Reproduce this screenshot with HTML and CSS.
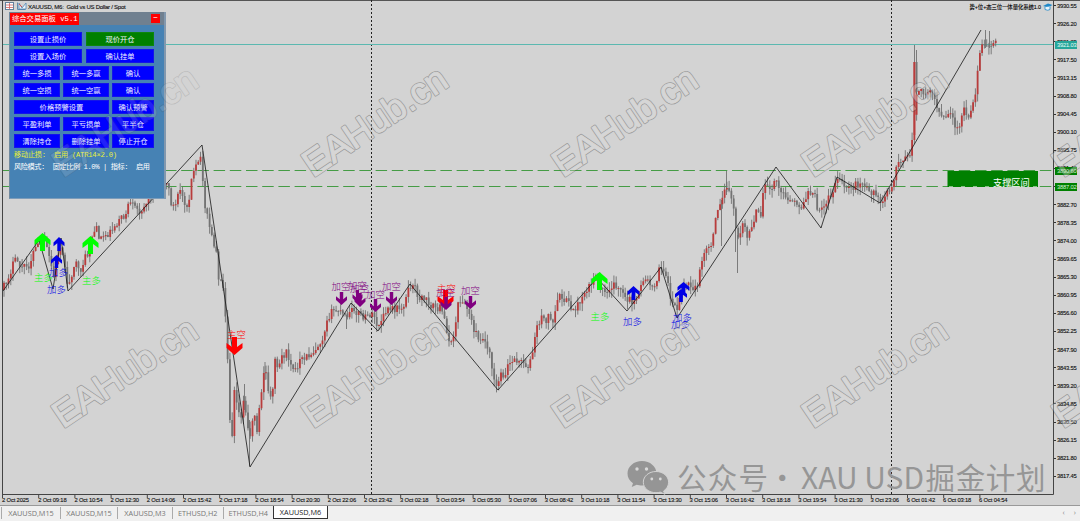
FILE: index.html
```html
<!DOCTYPE html>
<html lang="zh-CN">
<head>
<meta charset="utf-8">
<title>XAUUSD, M6</title>
<link rel="stylesheet" href="styles.css">
</head>
<body>
<div class="terminal">
  <main class="chart">
    <svg class="plot" id="plot" width="1054" height="495" viewBox="0 0 1054 495"></svg>
    <div class="prices" id="prices"></div>
    <div class="times" id="times"></div>

    <div class="title">
      <svg width="23" height="9" viewBox="0 0 23 9">
        <rect x=".5" y=".5" width="8" height="7" fill="#fff" stroke="#64809c"/>
        <path d="M1 3h7M1 5.5h7M4.5 1v6" stroke="#d06060" stroke-width=".8"/>
        <path d="M12.5 .5v7h8" fill="none" stroke="#5d89ac"/>
        <path d="M14 1l3 5 4-5v6h-7z" fill="#eef4f9" stroke="#4f86b5" stroke-width=".8"/>
        <path d="M14 2l3 3" stroke="#d05050"/>
      </svg>
      <span class="title-text">XAUUSD, M6:&nbsp; Gold vs US Dollar / Spot</span>
    </div>
    <div class="expert">
      <span>势+位+态三位一体量化系统1.0</span>
      <svg width="10" height="8" viewBox="0 0 10 8"><path d="M0 3l5-2.500 4.500 1.500-4.500 2.500z" fill="#2088c8"/><path d="M2 4v2.500q3 1.500 5 0V3.500" fill="#e9f4fb" stroke="#2088c8" stroke-width=".8"/></svg>
    </div>

    <section class="panel">
      <header class="panel-head"><span class="panel-title">综合交易面板 v5.1</span><span class="panel-min">−</span></header>
      <div class="panel-body">
        <div class="row halves"><button>设置止损价</button><button class="go">现价开仓</button></div>
        <div class="row halves"><button>设置入场价</button><button>确认挂单</button></div>
        <div class="row thirds"><button>统一多损</button><button>统一多赢</button><button>确认</button></div>
        <div class="row thirds"><button>统一空损</button><button>统一空赢</button><button>确认</button></div>
        <div class="row thirds"><button class="wide">价格预警设置</button><button>确认预警</button></div>
        <div class="row thirds"><button>平盈利单</button><button>平亏损单</button><button>平半仓</button></div>
        <div class="row thirds"><button>清除持仓</button><button>删除挂单</button><button>停止开仓</button></div>
        <p class="status trail">移动止损: &nbsp;启用 (ATR14×2.0)</p>
        <p class="status risk">风险模式: &nbsp;固定比例 1.0% | 指标: &nbsp;启用</p>
      </div>
    </section>
  </main>
  <nav class="tabs">
    <span>XAUUSD,M15</span><span>XAUUSD,M15</span><span>XAUUSD,M3</span><span>ETHUSD,H2</span><span>ETHUSD,H4</span><span class="active">XAUUSD,M6</span>
    <div class="scroll"><i>‹</i><i>›</i></div>
  </nav>
  <svg class="overlay" id="overlay" width="1080" height="521" viewBox="0 0 1080 521"></svg>
</div>
<script src="chart.js"></script>
</body>
</html>
```
FILE: styles.css
```css
* { box-sizing: border-box; }
body { margin: 0; background: #d3d3d3; font-family: "Liberation Sans", "Noto Sans CJK SC", sans-serif; }
.terminal { position: relative; width: 1080px; height: 521px; overflow: hidden; display: flex; flex-direction: column; }
.chart { position: relative; height: 505px; display: grid; grid-template-columns: 1054px 26px; grid-template-rows: 495px 10px; border-top: 1px solid #555; background: #d3d3d3; }
.plot { display: block; margin-top: -1px; }

.prices { margin-top: -4.500px; height: 490px; font-size: 5.800px; letter-spacing: -.22px; color: #111; -webkit-text-stroke: .12px #111; }
.price { height: 18.110px; line-height: 18.110px; display: flex; align-items: center; white-space: nowrap; }
.price::before { content: ""; width: 2px; height: 1px; background: #333; margin-right: 1px; }
.tag { position: absolute; left: 1055px; width: 22px; height: 8px; line-height: 8px; padding-left: 2px; color: #d9f3d9; background: #008000; -webkit-text-stroke: 0; }
.tag.last { background: #26a69a; color: #e4fbf8; }

.times { display: flex; padding-left: 2px; font-size: 5.800px; line-height: 8px; letter-spacing: -.15px; color: #111; -webkit-text-stroke: .12px #111; white-space: nowrap; }
.time { flex: 0 0 36.200px; width: 36.200px; }

.title { position: absolute; left: 5px; top: 1px; height: 9px; display: flex; align-items: center; font-size: 6px; letter-spacing: -.25px; color: #111; -webkit-text-stroke: .12px #111; white-space: nowrap; }
.expert { position: absolute; right: 27px; top: 0; height: 11px; display: flex; align-items: center; gap: 2px; font-size: 5.400px; letter-spacing: -.1px; color: #000; -webkit-text-stroke: .1px #000; white-space: nowrap; }

.panel { position: absolute; left: 9px; top: 11px; width: 157px; height: 187px; background: #4682b4; border-right: 2px solid #8298ae; border-bottom: 1px solid #7c9cba; border-left: 1px solid #70899f; }
.panel-head { height: 13px; background: #708090; display: flex; justify-content: space-between; align-items: center; padding-right: 4px; }
.panel-title { height: 12px; line-height: 12px; padding: 0 2px; width: 69px; background: #f00; color: #fff; font-family: "Liberation Mono", "Noto Sans CJK SC", monospace; font-size: 7.300px; white-space: nowrap; }
.panel-min { width: 9px; height: 9px; line-height: 8px; background: #f00; color: #fff; font-size: 8px; text-align: center; }
.panel-body { padding: 7px 10px 0 4px; display: flex; flex-direction: column; gap: 3px; }
.row { display: grid; height: 14px; }
.halves { grid-template-columns: 68px 68px; gap: 4px; }
.thirds { grid-template-columns: 46px 46px 42px; gap: 3px; }
.wide { grid-column: span 2; }
button { margin: 0; padding: 0; border: 1px solid #1414e8; background: #00f; color: #f0f0ff; font: 7.300px/11px "Noto Sans CJK SC", sans-serif; white-space: nowrap; }
.go { background: #008000; border-color: #0d860d; }
.status { margin: 0; height: 8.500px; font: 7.200px/9px "Liberation Mono", "Noto Sans CJK SC", monospace; white-space: pre; }
.trail { color: #e8f03a; letter-spacing: -.24px; }
.risk { color: #fff; letter-spacing: -.43px; }

.tabs { height: 16px; display: flex; background: #f0f0f0; border-top: 1px solid #999; padding-left: 1px; font: 7.300px/12px "Open Sans", sans-serif; color: #777; }
.tabs span { height: 12px; margin-top: 1px; text-align: center; white-space: nowrap; border-left: 1px solid #aaa; width: 50.500px; }
.tabs span:nth-child(1) { width: 59px; }
.tabs span:nth-child(2) { width: 57px; }
.tabs span:nth-child(3) { width: 55px; }
.tabs .active { margin-top: 0; height: 13px; width: 55px; border: 1px solid #333; border-top: 0; background: #fff; color: #222; }
.scroll { margin-left: auto; padding-right: 4px; display: flex; gap: 9px; color: #888; }
.scroll i { font-style: normal; }

.overlay { position: absolute; inset: 0; pointer-events: none; }
.wm { font: 37px "Liberation Sans", sans-serif; stroke-linejoin: round; }
.wm-edge { fill: #404040; stroke: #404040; stroke-width: 2.500; }
.wm-face { fill: #dcdcdc; stroke: #dcdcdc; stroke-width: .9; }
.on-chart { opacity: .36; }
.on-panel { opacity: .15; }
.brand { font: 29.500px "Noto Sans CJK SC", sans-serif; fill: #969696; }
.mark { font: 9.400px "Noto Sans CJK SC", sans-serif; font-weight: 300; }
.zone { font: 9.200px "Noto Sans CJK SC", sans-serif; fill: #fff; }
```
FILE: chart.js
```js
// Price path in plot coordinates: x, y pairs.
const path = [3,289,7,280,11,270,14,262,18,261,21,268,25,267,29,266,32,256,36,248,40,243,44,241,48,252,51,265,54,278,57,260,60,243,63,252,65,270,67,281,69,286,72,272,75,262,79,273,82,266,85,258,89,253,92,236,96,228,100,238,106,234,110,232,115,225,120,219,125,217,128,205,133,206,138,211,143,208,148,200,153,190,163,187,167,182,169,190,172,207,176,205,180,188,184,200,188,207,191,180,194,173,199,160,202,160,204,203,208,219,212,238,216,250,219,280,223,285,226,320,228,365,230,420,232,438,234,385,237,400,240,420,244,400,248,430,251,433,254,410,257,430,260,403,263,378,266,372,268,393,272,395,275,362,279,365,282,356,287,353,291,362,297,372,300,362,306,357,312,353,318,345,323,337,327,318,333,311,338,310,343,315,348,317,353,309,358,312,364,319,370,314,375,318,377,326,381,323,386,311,393,309,402,308,406,298,410,286,415,288,420,300,424,297,428,302,434,307,440,308,444,318,448,335,452,347,455,325,459,300,465,304,468,312,472,320,475,334,480,337,486,342,490,350,493,376,498,386,501,370,505,378,508,364,513,362,519,360,524,365,529,365,533,352,536,328,541,318,546,320,550,313,553,326,556,308,560,297,566,299,571,309,578,306,583,293,590,284,594,280,598,278,602,290,606,290,612,286,617,284,620,290,626,302,630,300,637,302,641,284,645,278,650,284,656,283,658,270,663,270,668,284,672,303,677,308,680,295,683,287,688,284,693,290,697,288,700,265,705,255,709,243,712,250,716,210,719,205,722,195,727,190,732,198,735,220,738,240,742,230,744,220,748,240,752,225,756,212,761,218,764,184,771,190,776,176,780,190,786,200,792,204,798,203,803,208,808,192,815,198,818,215,820,212,827,200,832,197,836,180,841,183,846,188,851,187,858,184,865,187,870,190,875,196,881,200,887,193,893,189,896,165,902,160,907,160,911,150,913.5,134,915.2,92,917,92,925,91,932,90,937,108,942,118,946,120,950,112,955,125,958,130,963,107,969,118,972,102,976,90,979,62,982,45,986,42,990,42,995,43];
const zigzag = "3,291 39,240 53,289 61,238 68,291 202,145 250,467 351,303 378,331 410,284 498,390 597,278 627,311 661,267 677,318 776,167 821,228 837,177 880,203 981,30";

function level(x) {
  for (let i = 2; i < path.length; i += 2) {
    if (x <= path[i]) {
      const t = (x - path[i - 2]) / (path[i] - path[i - 2]);
      return path[i - 1] + t * (path[i + 1] - path[i - 1]);
    }
  }
  return path[path.length - 1];
}
let seed = 17;
const rnd = () => (seed = (seed * 16807) % 2147483647) / 2147483647;

let s = '<path d="M371.500 0V494M891.500 0V494" stroke="#222" stroke-dasharray="2 2"/>';
s += '<path d="M2 44.500H1054" stroke="#5bb8b0"/>';
s += '<path d="M3 170.500H1054M3 186.500H1054" stroke="#459c45" stroke-dasharray="11.500 4.700"/>';
let wicks = "", up = "", down = "";
let open = 290;
for (let x = 4; x < 996; x += 2.259) {
  const close = level(x) + (rnd() - .5) * 8;
  const top = Math.min(open, close), h = Math.max(1, Math.abs(close - open));
  wicks += `M${x.toFixed(1)} ${(top - rnd() * 8).toFixed(1)}V${(top + h + rnd() * 8).toFixed(1)}`;
  const body = `M${(x - .9).toFixed(1)} ${top.toFixed(1)}h1.800v${h.toFixed(1)}h-1.800z`;
  if (close < open) up += body; else down += body;
  open = close;
}
// Long single-bar spikes.
wicks += "M726.500 171V195M721.500 200V246M737.500 235V273M735.500 220V252M346.500 315V329M914.500 45V70M916.500 50V95M249.500 420V466M244.500 384V410M985.500 30V48M989.500 31V48M265 362V380";
up += "M913.300 62h2.200v73h-2.200z";
down += "M915.700 62h1.800v30h-1.800z";
s += `<path d="${wicks}" stroke="#6c6c6c" stroke-width=".85"/>`;
s += `<path d="${up}" fill="#b93c3c"/><path d="${down}" fill="#737373"/>`;
s += `<polyline points="${zigzag}" fill="none" stroke="#151515" stroke-width=".8"/>`;
s += '<rect x="947.500" y="171" width="90.500" height="16" fill="#008000"/><path d="M949 186.500h88" stroke="#bbdcbb" stroke-width=".7" stroke-dasharray="4 8"/><text class="zone" x="993" y="185.500">支撑区间</text>';

const colours = { g: "#00ff00", b: "#0000e6", r: "#ff0000", p: "#800080" };
// Direction, colour, centre x, top y, width, height.
[["u","g",42.5,233,16,18],["u","g",90.5,236,16,18],["u","b",59,237,11,14],["u","b",56.5,255,11,13],
 ["d","r",234.5,337,16,18],["d","p",341.5,292,11,13],["d","p",357.5,290,10,13],["d","p",360,293,11,14],["d","p",375.5,299,11,13],["d","p",391.5,292,11,13],
 ["d","r",445.5,290,16,18],["d","p",446,297,11,13],["d","p",470.5,296,11,13],["u","g",599.5,272,16,18],["u","b",633.5,286,12,14],["u","b",683.5,282,12,13],["u","b",681,289,12,13]
].forEach(([dir, c, x, y, w, h]) => {
  const flip = dir === "d" ? -1 : 1, y0 = dir === "d" ? y + h : y;
  s += `<path transform="translate(${x} ${y0}) scale(${w / 16} ${flip * h / 18})" fill="${colours[c]}" d="M0 0L8 7V12L2.500 8V18H-2.500V8L-8 12V7Z"/>`;
});
[["主多","g",34,281],["主多","g",82,284],["加多","b",49,276],["加多","b",47,293],["主空","r",227,338],
 ["加空","p",331.5,290],["加空","p",348,289],["加空","p",350,292],["加空","p",366,297.500],["加空","p",382,290],
 ["主空","r",437,292],["加空","p",436,296],["加空","p",461,294],["主多","g",590.5,320],["加多","b",623,325],["加多","b",673,321],["加多","b",671,328]
].forEach(([t, c, x, y]) => { s += `<text class="mark" x="${x}" y="${y}" fill="${colours[c]}">${t}</text>`; });
s += '<path d="M2.500 0V494.500H1053.500V0" fill="none" stroke="#444"/>';

const times = ["2 Oct 2025"];
["09:18","10:54","12:30","14:06","15:42","17:18","18:54","20:30","22:06","23:42"].forEach(t => times.push("2 Oct " + t));
["02:18","03:54","05:30","07:06","08:42","10:18","11:54","13:30","15:06","16:42","18:18","19:54","21:30","23:06"].forEach(t => times.push("3 Oct " + t));
["01:42","03:18","04:54"].forEach(t => times.push("6 Oct " + t));
let ticks = "";
times.forEach((_, i) => ticks += `M${(2.5 + i * 36.2).toFixed(1)} 494v4`);
s += `<path d="${ticks}" stroke="#444"/>`;
const plot = document.getElementById("plot");
plot.style.overflow = "visible";
plot.innerHTML = s;
document.getElementById("times").innerHTML = times.map(t => `<span class="time">${t}</span>`).join("");

let p = "";
for (let i = 0; i < 27; i++) p += `<div class="price">${(3930.55 - i * 4.35).toFixed(2)}</div>`;
p += '<div class="tag last" style="top:40px">3921.03</div><div class="tag" style="top:166px">3890.60</div><div class="tag" style="top:182px">3887.02</div>';
document.getElementById("prices").innerHTML = p;

// Outlined watermark: a dark edge layer under a slightly thinner light face.
let o = "";
for (const y of [178, 429]) for (const x of [63, 313, 563, 813, 1063]) {
  const tone = x === 63 && y === 178 ? "on-panel" : "on-chart";
  o += `<g class="${tone}" transform="translate(${x} ${y}) rotate(-34)">`;
  for (const layer of ["edge", "face"])
    o += `<text class="wm wm-${layer}" textLength="166">EAHub.cn</text>`;
  o += "</g>";
}
o += `<g fill="#959595"><path d="M642 461c-8 0-14.500 5.500-14.500 12.500 0 4 2 7.500 5.500 9.800l-1.300 3.700 5-2.300c1.500.5 3.500.8 5.300.8 8 0 14.500-5 14.500-12s-6.500-12.500-14.500-12.500z"/>
<path d="M656 471.500c-7 0-12.700 4.700-12.700 10.700s5.700 10.500 12.700 10.500c1.500 0 3-.2 4.300-.6l4.500 2.200-1.200-3.300c3-2 5-5 5-8.800 0-6-5.600-10.700-12.600-10.700z" stroke="#d3d3d3"/></g>
<g fill="#d9d9d9"><circle cx="637" cy="469" r="1.700"/><circle cx="646.500" cy="469" r="1.700"/><circle cx="651.800" cy="479" r="1.400"/><circle cx="660.300" cy="479" r="1.400"/></g>
<text class="brand" x="677" y="488.500" textLength="91">公众号</text><text class="brand" x="767.500" y="488.500">·</text><text class="brand" x="801" y="488.500" textLength="123" lengthAdjust="spacingAndGlyphs">XAU USD</text><text class="brand" x="925.500" y="488.500" textLength="120">掘金计划</text>`;
document.getElementById("overlay").innerHTML = o;
```
